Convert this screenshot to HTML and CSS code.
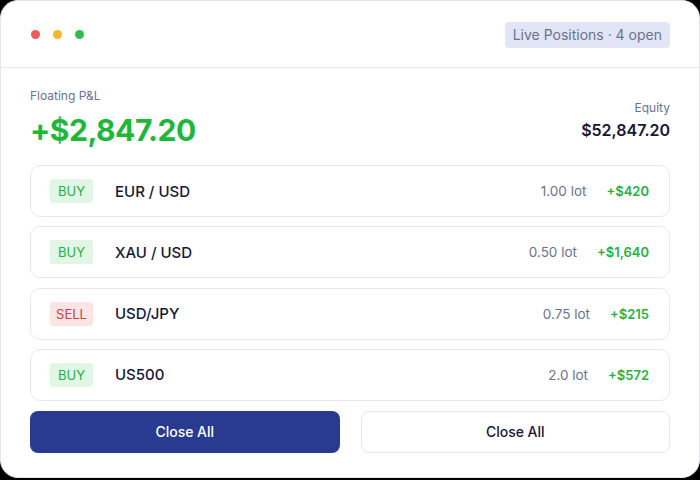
FILE: index.html
```html
<!DOCTYPE html>
<html>
<head>
<meta charset="utf-8">
<link rel="stylesheet" href="styles.css">
</head>
<body>
<div class="window">
  <header class="titlebar">
    <div class="dots">
      <span class="dot red"></span>
      <span class="dot yellow"></span>
      <span class="dot green"></span>
    </div>
    <div class="pill">Live Positions · 4 open</div>
  </header>
  <main class="content">
    <section class="summary">
      <div class="pnl">
        <div class="label">Floating P&amp;L</div>
        <div class="pnl-value">+$2,847.20</div>
      </div>
      <div class="equity">
        <div class="label">Equity</div>
        <div class="equity-value">$52,847.20</div>
      </div>
    </section>
    <section class="rows">
      <div class="row">
        <span class="side buy">BUY</span>
        <span class="sym">EUR / USD</span>
        <span class="lot">1.00 lot</span>
        <span class="profit">+$420</span>
      </div>
      <div class="row">
        <span class="side buy">BUY</span>
        <span class="sym">XAU / USD</span>
        <span class="lot">0.50 lot</span>
        <span class="profit">+$1,640</span>
      </div>
      <div class="row">
        <span class="side sell">SELL</span>
        <span class="sym">USD/JPY</span>
        <span class="lot">0.75 lot</span>
        <span class="profit">+$215</span>
      </div>
      <div class="row">
        <span class="side buy">BUY</span>
        <span class="sym">US500</span>
        <span class="lot">2.0 lot</span>
        <span class="profit">+$572</span>
      </div>
    </section>
    <section class="actions">
      <button class="btn primary">Close All</button>
      <button class="btn secondary">Close All</button>
    </section>
  </main>
</div>
</body>
</html>
```
FILE: styles.css
```css
* { box-sizing: border-box; }
html, body { margin: 0; padding: 0; }
body {
  background: #000;
  font-family: Inter, "Noto Sans", sans-serif;
  width: 700px;
  height: 480px;
  overflow: hidden;
}
.window {
  width: 700px;
  height: 478px;
  background: #fff;
  border: 1px solid #e3e5ef;
  border-radius: 18px;
  display: flex;
  flex-direction: column;
  overflow: hidden;
}
.titlebar {
  height: 67px;
  border-bottom: 1px solid #e3e5ef;
  display: flex;
  align-items: center;
  justify-content: space-between;
  padding: 0 29px 0 29px;
  flex: none;
}
.dots { display: flex; gap: 13px; padding-left: 1px; }
.dot { width: 9px; height: 9px; border-radius: 50%; display: block; }
.dot.red { background: #f05a5a; }
.dot.yellow { background: #f7b729; }
.dot.green { background: #2fbf4a; }
.pill {
  background: #e1e5f5;
  color: #6b7290;
  font-size: 14px;
  border-radius: 4px;
  height: 26px;
  line-height: 26px;
  padding: 0 8px;
  margin-top: 1px;
}
.content {
  padding: 20px 29px 0 29px;
  display: flex;
  flex-direction: column;
}
.summary {
  display: flex;
  justify-content: space-between;
  align-items: flex-start;
}
.label { font-size: 12px; line-height: 15px; color: #6b7290; }
.pnl-value {
  font-size: 30px;
  font-weight: 700;
  color: #1db83a;
  letter-spacing: -0.5px;
  line-height: 36px;
  margin-top: 9px;
  margin-bottom: 17px;
}
.equity { text-align: right; padding-top: 12px; }
.equity .label { margin-bottom: 5px; }
.equity-value { font-size: 16px; line-height: 20px; font-weight: 600; color: #16163a; }
.rows { display: flex; flex-direction: column; gap: 9.33px; }
.row {
  height: 52px;
  border: 1px solid #e6e8f0;
  border-radius: 10px;
  display: flex;
  align-items: center;
  padding: 0 19px 0 19px;
}
.side {
  width: 43px;
  height: 24px;
  line-height: 24px;
  text-align: center;
  font-size: 13px;
  border-radius: 3px;
}
.side.buy { background: #e2f6e6; color: #25b23e; }
.side.sell { background: #fbe4e4; color: #c8414a; }
.sym {
  margin-left: 22px;
  font-size: 15px;
  font-weight: 500;
  color: #16163a;
  flex: 1;
}
.lot { font-size: 13.5px; color: #6b7290; }
.profit {
  font-size: 13px;
  font-weight: 600;
  color: #25b23e;
  margin-left: 20px;
  margin-right: 1px;
}
.actions {
  display: grid;
  grid-template-columns: 1fr 1fr;
  gap: 21px;
  margin-top: 10px;
}
.btn {
  height: 42px;
  border-radius: 8px;
  font-family: inherit;
  font-size: 14px;
  font-weight: 500;
  cursor: pointer;
}
.btn.primary { background: #283b91; color: #fff; border: none; }
.btn.secondary { background: #fff; color: #16163a; border: 1px solid #e3e5ef; }
```
